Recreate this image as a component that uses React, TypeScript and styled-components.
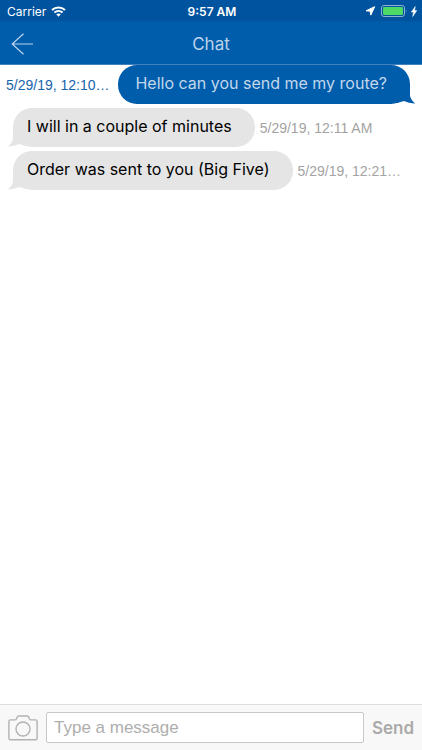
import React, { useState } from "react";
import styled, { createGlobalStyle } from "styled-components";

const GlobalStyle = createGlobalStyle`
  * { box-sizing: border-box; }
  body {
    margin: 0;
    background: #fff;
    font-family: Inter, "Liberation Sans", sans-serif;
  }
`;

const Screen = styled.div`
  display: flex;
  flex-direction: column;
  min-height: 100vh;
`;

const TopBar = styled.header`
  border-bottom: 1px solid #3f80bd;
  background: linear-gradient(#0054a0 0, #00529c 20px, #005dab 22px);
`;

const StatusBar = styled.div`
  display: grid;
  grid-template-columns: 1fr auto 1fr;
  align-items: center;
  height: 22px;
  padding: 0 5px 0 7px;
  color: #fff;
  font-size: 12px;
`;

const StatusGroup = styled.div<{ $end?: boolean }>`
  display: flex;
  align-items: center;
  gap: ${(p) => (p.$end ? 4 : 5)}px;
  justify-content: ${(p) => (p.$end ? "flex-end" : "flex-start")};
`;

const Clock = styled.span`
  font-weight: 600;
`;

const NavBar = styled.div`
  display: grid;
  grid-template-columns: 44px 1fr 44px;
  align-items: center;
  height: 42px;
  padding-top: 1px;
`;

const BackButton = styled.button`
  display: flex;
  padding: 0 0 0 11px;
  border: 0;
  background: none;
`;

const Title = styled.h1`
  margin: 0;
  color: #bdd3ea;
  font-size: 17px;
  font-weight: 400;
  text-align: center;
`;

const Messages = styled.ul`
  flex: 1;
  display: flex;
  flex-direction: column;
  gap: 4px;
  margin: 0;
  padding: 0;
  list-style: none;
`;

const MessageRow = styled.li<{ $own: boolean }>`
  display: flex;
  flex-direction: ${(p) => (p.$own ? "row-reverse" : "row")};
  align-items: center;
  gap: 5px;
  padding: 0 12px 0 ${(p) => (p.$own ? 6 : 13)}px;
`;

const Bubble = styled.div<{ $own: boolean }>`
  position: relative;
  flex: none;
  max-width: 80%;
  padding: 7px 23px 9px ${(p) => (p.$own ? 17 : 14)}px;
  border-radius: 19px;
  background: ${(p) => (p.$own ? "#005dab" : "#e5e5e5")};
  color: ${(p) => (p.$own ? "#c3d7eb" : "#000")};
  font-size: 16px;
  line-height: 23px;
`;

const Tail = styled.svg<{ $own: boolean }>`
  position: absolute;
  bottom: 0;
  ${(p) => (p.$own ? "right: -5px; transform: scaleX(-1);" : "left: -5px;")}
  fill: ${(p) => (p.$own ? "#005dab" : "#e5e5e5")};
`;

const Time = styled.time<{ $own: boolean }>`
  flex: 1;
  white-space: nowrap;
  color: ${(p) => (p.$own ? "#1765ad" : "#a3a3a3")};
  font-family: "Liberation Sans", sans-serif;
  font-size: 14px;
`;

const Composer = styled.form`
  display: flex;
  align-items: center;
  height: 46px;
  padding: 0 8px;
  border-top: 1px solid #dcdcdc;
  background: #f8f8f8;
`;

const CameraButton = styled.button`
  display: flex;
  margin-right: 8px;
  padding: 0;
  border: 0;
  background: none;
`;

const MessageInput = styled.input`
  flex: 1;
  min-width: 0;
  height: 31px;
  padding: 0 7px;
  border: 1px solid #c8c8c8;
  border-radius: 2px;
  background: #fff;
  font-family: "Liberation Sans", sans-serif;
  font-size: 17px;
  outline: none;
  &::placeholder { color: #aeaeae; opacity: 1; }
`;

const SendButton = styled.button`
  margin-left: 8px;
  padding: 0;
  border: 0;
  background: none;
  color: #aaa;
  font: inherit;
  font-size: 17px;
  font-weight: 600;
`;

const messages = [
  { text: "Hello can you send me my route?", time: "5/29/19, 12:10…", own: true },
  { text: "I will in a couple of minutes", time: "5/29/19, 12:11 AM", own: false },
  { text: "Order was sent to you (Big Five)", time: "5/29/19, 12:21…", own: false },
];

const WifiIcon = () => (
  <svg width="15" height="11" viewBox="0 0 15 11" fill="none" stroke="#fff" strokeWidth="2">
    <path d="M1 4.1C4.7.6 10.3.6 14 4.1M3.4 6.6c2.4-2.2 5.8-2.2 8.2 0" />
    <path d="M5.2 8.3c1.3-1.2 3.3-1.2 4.6 0L7.5 10.7z" fill="#fff" stroke="none" />
  </svg>
);

const LocationIcon = () => (
  <svg width="12" height="10" viewBox="0 0 12 10" fill="#fff" stroke="#fff" strokeLinejoin="round">
    <path d="M9.7.7 5.8 9.1 5.2 5.2 1 4.8z" />
  </svg>
);

const BatteryIcon = () => (
  <svg width="26" height="12" viewBox="0 0 26 12" fill="none">
    <rect x=".5" y=".5" width="23" height="11" rx="2.5" stroke="#8bb1d5" />
    <rect x="2" y="2" width="20" height="8" rx="1.2" fill="#4cd964" />
    <path d="M24.8 4q1.2 2 0 4z" fill="#8bb1d5" />
  </svg>
);

const BoltIcon = () => (
  <svg width="6" height="11" viewBox="0 0 6 11" fill="#fff" stroke="#fff" strokeWidth=".5">
    <path d="M4.3.5.3 6.1h2.2l-.8 4.4 4.1-5.9H3.5z" />
  </svg>
);

const BackIcon = () => (
  <svg width="23" height="22" viewBox="0 0 23 22" fill="none" stroke="#bdd3ea" strokeWidth="1.2">
    <path d="M12.5.7 1.2 11l11.3 10.3M1.2 11H22" />
  </svg>
);

const CameraIcon = () => (
  <svg width="30" height="26" viewBox="0 0 30 26" fill="none" stroke="#b2b2b2" strokeWidth="1.4">
    <path d="M2.5 4.9H7q1 0 1.4-1l.7-1.7q.5-1.2 1.7-1.2h8.4q1.2 0 1.7 1.2l.7 1.7q.4 1 1.4 1h4.5q1.6 0 1.6 1.6v16.7q0 1.6-1.6 1.6h-25Q.9 24.8.9 23.2V6.5q0-1.6 1.6-1.6z" />
    <circle cx="15" cy="14" r="7" />
  </svg>
);

export default function App() {
  const [draft, setDraft] = useState("");
  return (
    <>
      <GlobalStyle />
      <Screen>
        <TopBar>
          <StatusBar>
            <StatusGroup>
              <span>Carrier</span>
              <WifiIcon />
            </StatusGroup>
            <Clock>9:57 AM</Clock>
            <StatusGroup $end>
              <LocationIcon />
              <BatteryIcon />
              <BoltIcon />
            </StatusGroup>
          </StatusBar>
          <NavBar>
            <BackButton aria-label="Back"><BackIcon /></BackButton>
            <Title>Chat</Title>
          </NavBar>
        </TopBar>
        <Messages>
          {messages.map((m) => (
            <MessageRow key={m.time} $own={m.own}>
              <Bubble $own={m.own}>
                {m.text}
                <Tail $own={m.own} width="20" height="20" viewBox="0 0 20 20" aria-hidden="true">
                  <path d="M5 0v11q0 4-5 8.4Q6 19.6 11 17l7 2V0z" />
                </Tail>
              </Bubble>
              <Time $own={m.own}>{m.time}</Time>
            </MessageRow>
          ))}
        </Messages>
        <Composer onSubmit={(e) => e.preventDefault()}>
          <CameraButton type="button" aria-label="Attach photo"><CameraIcon /></CameraButton>
          <MessageInput
            aria-label="Message"
            placeholder="Type a message"
            value={draft}
            onChange={(e) => setDraft(e.target.value)}
          />
          <SendButton type="submit">Send</SendButton>
        </Composer>
      </Screen>
    </>
  );
}
